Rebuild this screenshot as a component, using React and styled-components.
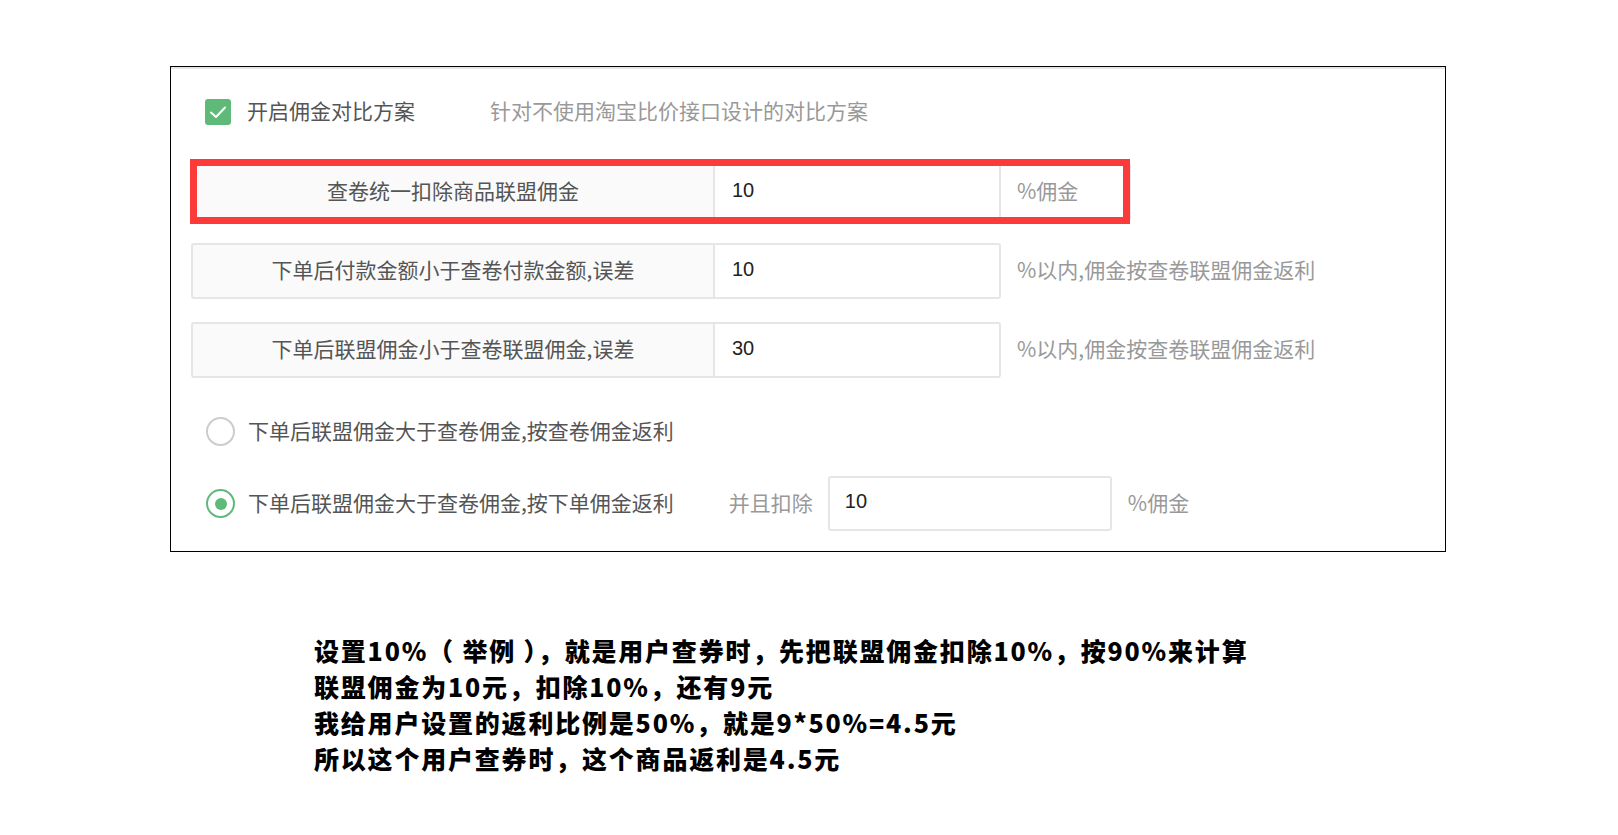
import React from "react";
import styled, { createGlobalStyle } from "styled-components";

const Global = createGlobalStyle`
  html, body { margin: 0; padding: 0; background: #fff; }
  body { font-family: "Noto Sans CJK SC", "Noto Sans", sans-serif; }
  * { box-sizing: border-box; }
`;

const Page = styled.div`
  width: 1618px;
  height: 835px;
  padding: 66px 0 0 170px;
  overflow: hidden;
`;

const Panel = styled.div`
  width: 1276px;
  height: 486px;
  border: 1px solid #000;
  box-shadow: inset 0 2px 0 #e6e6e6;
  padding: 32px 20px 0 20px;
  display: flex;
  flex-direction: column;
`;

const Header = styled.div`
  display: flex;
  align-items: center;
  height: 26px;
  padding-left: 14px;
`;

const CheckBox = styled.span`
  width: 26px;
  height: 26px;
  border-radius: 3px;
  background: #5fba7a;
  display: flex;
  align-items: center;
  justify-content: center;
  flex: none;
`;

const HeaderLabel = styled.span`
  margin-left: 16px;
  padding-bottom: 4px;
  font-size: 21px;
  color: #555;
  white-space: nowrap;
`;

const Hint = styled.span`
  margin-left: 75px;
  padding-bottom: 4px;
  font-size: 21px;
  color: #999;
  white-space: nowrap;
`;

const Rows = styled.div`
  margin-top: 39px;
  display: flex;
  flex-direction: column;
  gap: 23px;
`;

const Row = styled.div`
  position: relative;
  display: flex;
  align-items: center;
  height: 56px;
`;

const Label = styled.div`
  width: 524px;
  height: 100%;
  flex: none;
  display: flex;
  align-items: center;
  justify-content: center;
  padding-bottom: 4px;
  background: #fafafa;
  border: 2px solid #e6e6e6;
  border-radius: 3px 0 0 3px;
  font-size: 21px;
  color: #555;
  white-space: nowrap;
`;

const GroupInput = styled.input`
  width: 286px;
  height: 100%;
  flex: none;
  border: 2px solid #e6e6e6;
  border-left: none;
  border-radius: ${(p) => (p.$joined ? "0" : "0 3px 3px 0")};
  padding: 0 0 4px 17px;
  font-family: "Liberation Sans", "Noto Sans", sans-serif;
  font-size: 20px;
  color: #222;
  background: #fff;
  outline: none;
`;

const Addon = styled.div`
  width: 130px;
  height: 100%;
  flex: none;
  display: flex;
  align-items: center;
  padding: 0 0 4px 16px;
  border: 2px solid #e6e6e6;
  border-left: none;
  font-size: 21px;
  color: #999;
  white-space: nowrap;
`;

const Suffix = styled.span`
  margin-left: ${(p) => p.$gap || 16}px;
  padding-bottom: 4px;
  font-size: 21px;
  color: #999;
  white-space: nowrap;
`;

const Highlight = styled.div`
  position: absolute;
  left: -1px;
  top: -5px;
  width: 940px;
  height: 65px;
  border: 7px solid #fd3a3a;
  pointer-events: none;
`;

const RadioRow = styled.div`
  display: flex;
  align-items: center;
  height: ${(p) => p.$h}px;
  margin-top: ${(p) => p.$mt}px;
  padding-left: 15px;
`;

const Radio = styled.span`
  width: 29px;
  height: 29px;
  flex: none;
  border-radius: 50%;
  border: 2px solid ${(p) => (p.$on ? "#5fba7a" : "#cccccc")};
  display: flex;
  align-items: center;
  justify-content: center;
  &::after {
    content: "";
    display: ${(p) => (p.$on ? "block" : "none")};
    width: 12px;
    height: 12px;
    border-radius: 50%;
    background: #5fba7a;
  }
`;

const RadioText = styled.span`
  margin-left: 13px;
  padding-bottom: 3px;
  font-size: 21px;
  color: #555;
  white-space: nowrap;
`;

const PlainInput = styled.input`
  margin-left: 15px;
  width: 284px;
  height: 55px;
  flex: none;
  border: 2px solid #e6e6e6;
  border-radius: 3px;
  padding: 0 0 4px 15px;
  font-family: "Liberation Sans", "Noto Sans", sans-serif;
  font-size: 20px;
  color: #222;
  background: #fff;
  outline: none;
`;

const Note = styled.div`
  margin: 80px 0 0 144px;
  font-family: "Noto Sans CJK SC", sans-serif;
  font-weight: 900;
  font-size: 25px;
  line-height: 36px;
  letter-spacing: 1.8px;
  color: #000;
  white-space: nowrap;
`;

const Check = () => (
  <svg width="18" height="14" viewBox="0 0 18 14" fill="none">
    <path d="M2 7.5 L7 12 L16 2.5" stroke="#fff" strokeWidth="2" strokeLinecap="round" strokeLinejoin="round" />
  </svg>
);

export default function App() {
  return (
    <>
      <Global />
      <Page>
        <Panel>
          <Header>
            <CheckBox>
              <Check />
            </CheckBox>
            <HeaderLabel>开启佣金对比方案</HeaderLabel>
            <Hint>针对不使用淘宝比价接口设计的对比方案</Hint>
          </Header>
          <Rows>
            <Row>
              <Label>查卷统一扣除商品联盟佣金</Label>
              <GroupInput $joined readOnly value="10" />
              <Addon>%佣金</Addon>
              <Highlight />
            </Row>
            <Row>
              <Label>下单后付款金额小于查卷付款金额,误差</Label>
              <GroupInput readOnly value="10" />
              <Suffix>%以内,佣金按查卷联盟佣金返利</Suffix>
            </Row>
            <Row>
              <Label>下单后联盟佣金小于查卷联盟佣金,误差</Label>
              <GroupInput readOnly value="30" />
              <Suffix>%以内,佣金按查卷联盟佣金返利</Suffix>
            </Row>
          </Rows>
          <RadioRow $h={30} $mt={38}>
            <Radio />
            <RadioText>下单后联盟佣金大于查卷佣金,按查卷佣金返利</RadioText>
          </RadioRow>
          <RadioRow $h={55} $mt={30}>
            <Radio $on />
            <RadioText>下单后联盟佣金大于查卷佣金,按下单佣金返利</RadioText>
            <Suffix $gap={55}>并且扣除</Suffix>
            <PlainInput readOnly value="10" />
            <Suffix>%佣金</Suffix>
          </RadioRow>
        </Panel>
        <Note>
          <div>设置10%（ 举例 ），就是用户查券时，先把联盟佣金扣除10%，按90%来计算</div>
          <div>联盟佣金为10元，扣除10%，还有9元</div>
          <div>我给用户设置的返利比例是50%，就是9*50%=4.5元</div>
          <div>所以这个用户查券时，这个商品返利是4.5元</div>
        </Note>
      </Page>
    </>
  );
}
